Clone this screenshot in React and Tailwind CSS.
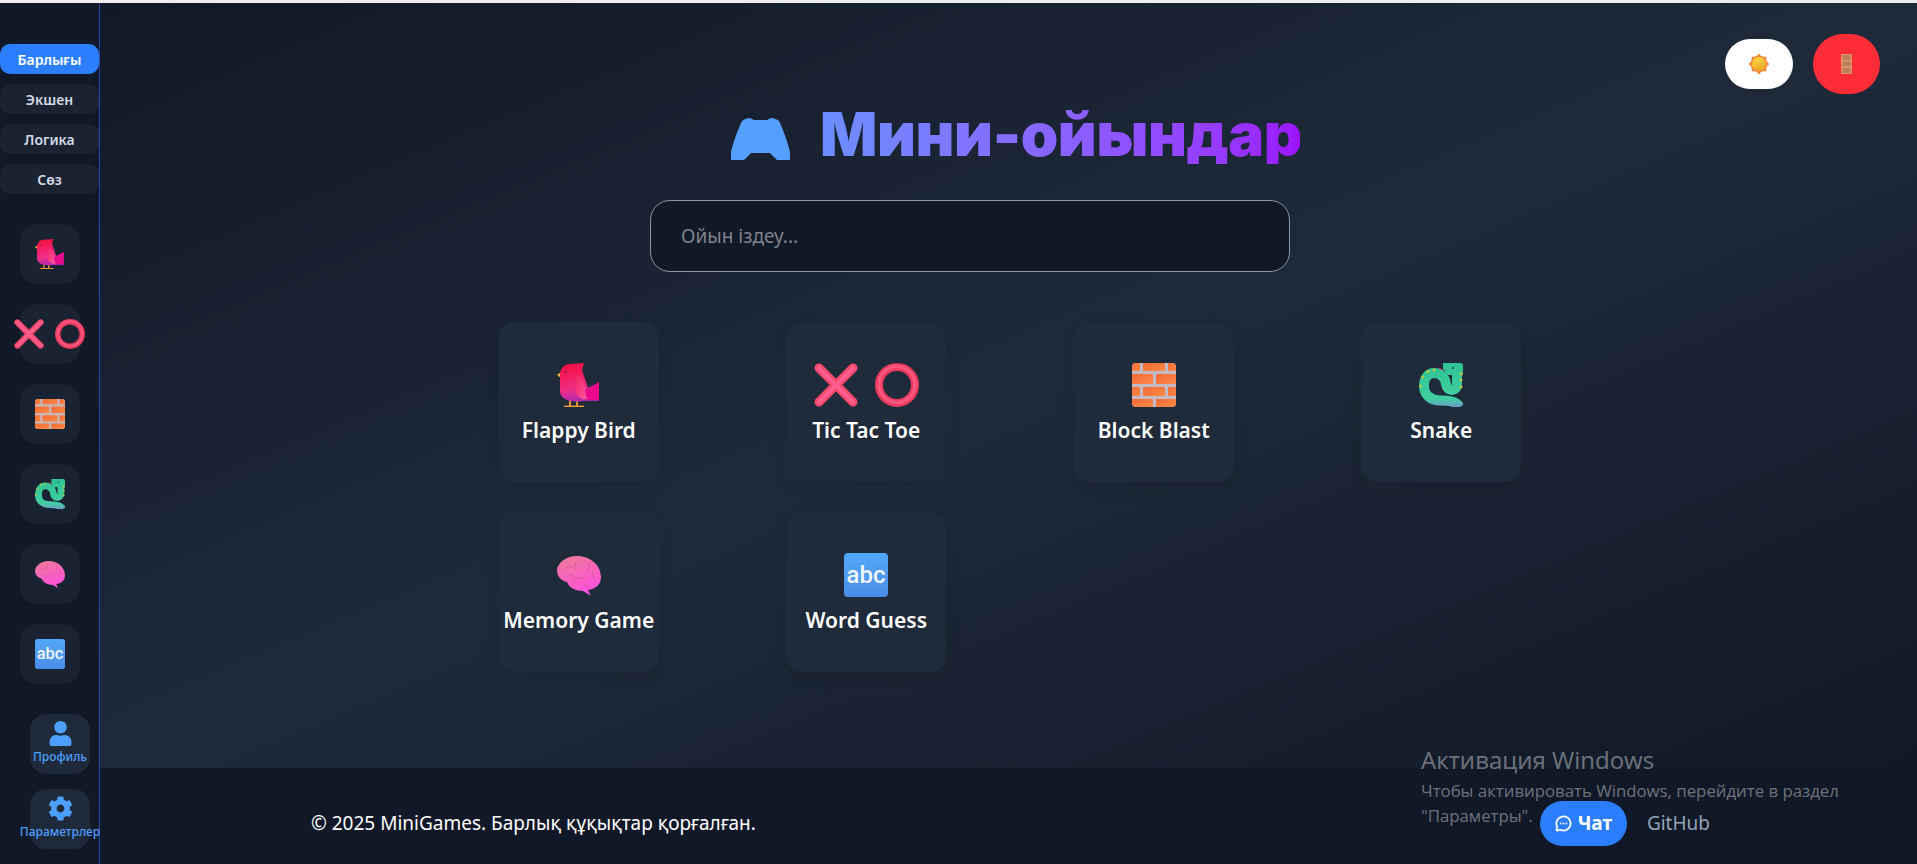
import { FaUser, FaCog } from "react-icons/fa";
import { MessageCircleMore } from "lucide-react";

const FONT = "font-['Noto_Sans','Open_Sans',sans-serif]";

function Bird({ size }) {
  return (
    <svg width={size} height={size} viewBox="0 0 44 44">
      <defs>
        <linearGradient id="birdBody" x1="0.3" y1="0" x2="0.5" y2="1">
          <stop offset="0" stopColor="#f5103f" />
          <stop offset="0.65" stopColor="#f02d86" />
          <stop offset="1" stopColor="#a92ab0" />
        </linearGradient>
        <linearGradient id="birdWing" x1="0" y1="0" x2="1" y2="1">
          <stop offset="0" stopColor="#f0225f" />
          <stop offset="1" stopColor="#ff5aa5" />
        </linearGradient>
      </defs>
      <path d="M13 36v7M20 36v7" stroke="#f0a030" strokeWidth="1.8" />
      <path d="M7 43.300h20" stroke="#f0a030" strokeWidth="1.400" />
      <path d="M0 12l4-3v6z" fill="#f4b93e" />
      <path d="M3 12C3 6 7 1 13 1l14-1-2 7 6 18 11-5v18H27c-3 .6-6 .6-9 .6C8 38 3 34 3 28z" fill="url(#birdBody)" />
      <path d="M18 12c4 0 7 3 9 10l4 14c-5 1-10-1-12-6z" fill="url(#birdWing)" />
      <path d="M42 19v18H30l-2-10z" fill="#ea0b8c" />
      <circle cx="9" cy="9" r="0.800" fill="#5c1030" />
    </svg>
  );
}

function Cross({ size }) {
  return (
    <svg width={size} height={size} viewBox="0 0 44 44">
      <path d="M5 5l34 34M39 5L5 39" stroke="#f8496f" strokeWidth="9" strokeLinecap="round" />
      <path d="M5 5l34 34M39 5L5 39" stroke="#ff5f8e" strokeWidth="4" strokeLinecap="round" />
    </svg>
  );
}

function Ring({ size }) {
  return (
    <svg width={size} height={size} viewBox="0 0 44 44">
      <circle cx="22" cy="22" r="18" fill="none" stroke="#ee3a5c" strokeWidth="8" />
      <circle cx="22" cy="21.500" r="18" fill="none" stroke="#f8557f" strokeWidth="3.500" />
    </svg>
  );
}

function Bricks({ size }) {
  const rows = [
    [[0, 8], [11, 22], [36, 8]],
    [[0, 21], [24, 20]],
    [[0, 8], [11, 22], [36, 8]],
    [[0, 21], [24, 20]],
  ];
  const ys = [0, 11, 24, 36];
  const hs = [8, 10, 9, 8];
  return (
    <svg width={size} height={size} viewBox="0 0 44 44">
      <defs>
        <clipPath id="brickClip"><rect width="44" height="44" rx="4" /></clipPath>
        <linearGradient id="brickFill" x1="0" y1="0" x2="1" y2="1">
          <stop offset="0" stopColor="#f56a35" />
          <stop offset="1" stopColor="#fb8a48" />
        </linearGradient>
      </defs>
      <g clipPath="url(#brickClip)">
        <rect width="44" height="44" fill="#c4bac4" />
        {rows.map((row, r) =>
          row.map(([x, w], i) => (
            <rect key={r + "-" + i} x={x} y={ys[r]} width={w} height={hs[r]} rx="1" fill="url(#brickFill)" />
          ))
        )}
      </g>
    </svg>
  );
}

function Snake({ size }) {
  return (
    <svg width={size} height={size} viewBox="0 0 44 44">
      <defs>
        <linearGradient id="snakeBody" gradientUnits="userSpaceOnUse" x1="0" y1="0" x2="0" y2="44">
          <stop offset="0" stopColor="#2fc295" />
          <stop offset="0.8" stopColor="#3fcf9f" />
          <stop offset="1" stopColor="#6a9fc8" />
        </linearGradient>
      </defs>
      <path d="M19 4l6 3-1 2-5 .5 2-2.500z" fill="#e6085f" />
      <path d="M38 5V21C38 29 28 29 27 21 26 14 22 10 15 10 8.500 10 5 16 5 23 5 32 12 37.500 21 37.500 30 37.500 37 38 41 44" fill="none" stroke="url(#snakeBody)" strokeWidth="10" />
      <path d="M24 0h17c2 0 3 1 3 3v9H29l-5-6z" fill="url(#snakeBody)" />
      <circle cx="34" cy="5" r="1" fill="#1d3b3a" />
      <g fill="#b9c93e">
        <circle cx="1.500" cy="23" r="1.500" /><circle cx="3.500" cy="14" r="1.500" /><circle cx="9" cy="8.500" r="1.500" /><circle cx="15" cy="7" r="1.500" />
        <circle cx="42" cy="11" r="1.500" /><circle cx="42" cy="17" r="1.500" /><circle cx="42" cy="24" r="1.500" />
      </g>
    </svg>
  );
}

function Brain({ size }) {
  return (
    <svg width={size} height={size} viewBox="0 0 44 44">
      <defs>
        <linearGradient id="brainBody" x1="0.2" y1="0" x2="0.6" y2="1">
          <stop offset="0" stopColor="#ee7a9a" />
          <stop offset="1" stopColor="#ff4fe0" />
        </linearGradient>
      </defs>
      <path d="M0 17C1 9 10 3 20 3 33 3 44 12 44 24 44 32 38 36 31 37L34 43 26 38C19 38 12 35 10 29 4 28 0 23 0 17z" fill="url(#brainBody)" />
      <path d="M7 17c4-5 9-4 12-1M16 27c4-3 11-3 14 0M32 9c1 5 0 8-4 11M37 18c-2 3-2 7 2 10M20 7c-2 2-2 4-1 7M12 21c2 2 4 3 6 2M26 30c1 2 3 3 6 3" fill="none" stroke="#d8568f" strokeWidth="0.800" />
    </svg>
  );
}

function Abc({ size }) {
  return (
    <svg width={size} height={size} viewBox="0 0 44 44">
      <defs>
        <linearGradient id="abcBox" x1="0" y1="0" x2="0" y2="1">
          <stop offset="0" stopColor="#52a8f8" />
          <stop offset="1" stopColor="#4a8de8" />
        </linearGradient>
      </defs>
      <rect width="44" height="44" rx="4" fill="url(#abcBox)" />
      <text x="22" y="30" textAnchor="middle" fontSize="24" fontWeight="500" fill="#f2f4ff" fontFamily="Roboto, sans-serif">abc</text>
    </svg>
  );
}

function Sun() {
  return (
    <svg width="20" height="20" viewBox="0 0 20 20">
      <defs>
        <linearGradient id="sunBody" x1="0.3" y1="0" x2="0.7" y2="1">
          <stop offset="0" stopColor="#fcd53f" />
          <stop offset="1" stopColor="#e8a426" />
        </linearGradient>
      </defs>
      <g fill="#f6853a">
        <circle cx="10" cy="10" r="8.500" />
        <circle cx="10" cy="1.500" r="1.500" /><circle cx="10" cy="18.500" r="1.500" /><circle cx="1.500" cy="10" r="1.500" /><circle cx="18.500" cy="10" r="1.500" />
        <circle cx="4" cy="4" r="1.500" /><circle cx="16" cy="4" r="1.500" /><circle cx="4" cy="16" r="1.500" /><circle cx="16" cy="16" r="1.500" />
      </g>
      <circle cx="10" cy="10" r="7" fill="url(#sunBody)" />
    </svg>
  );
}

function Door() {
  return (
    <svg width="11" height="20" viewBox="0 0 11 20">
      <rect width="11" height="20" fill="#e39460" />
      <rect x="1.500" y="1" width="8" height="5" fill="#b9805f" />
      <rect x="1.500" y="7.500" width="8" height="4.500" fill="#b9805f" />
      <rect x="1.500" y="14" width="8" height="5" fill="#b9805f" />
    </svg>
  );
}

function Xo({ size, gap }) {
  return (
    <div className="flex shrink-0" style={{ gap }}>
      <Cross size={size} />
      <Ring size={size} />
    </div>
  );
}

const GAMES = [
  { name: "Flappy Bird", icon: (s) => <Bird size={s} /> },
  { name: "Tic Tac Toe", icon: (s) => <Xo size={s} gap={s * 0.38} /> },
  { name: "Block Blast", icon: (s) => <Bricks size={s} /> },
  { name: "Snake", icon: (s) => <Snake size={s} /> },
  { name: "Memory Game", icon: (s) => <Brain size={s} /> },
  { name: "Word Guess", icon: (s) => <Abc size={s} /> },
];

const FILTERS = ["Барлығы", "Экшен", "Логика", "Сөз"];

export default function App() {
  return (
    <div className={`h-[864px] flex flex-col overflow-hidden bg-[#111827] ${FONT}`}>
      <div className="h-[3px] bg-[#eeeeee] shrink-0" />
      <div className="flex flex-1 min-h-0">

        {/* Sidebar */}
        <aside className="w-[100px] shrink-0 bg-[#111827] border-r border-[#2a46a6] pt-[41px]">
          <div className="flex flex-col gap-[10px]">
            {FILTERS.map((f, i) => (
              <button
                key={f}
                className={`h-[30px] rounded-[10px] text-[14px] font-semibold ${i === 0 ? "bg-[#2b7fff] text-white" : "bg-[#1a2332] text-[#d3dae5]"}`}
              >
                {f}
              </button>
            ))}
          </div>
          <div className="flex flex-col items-center gap-[20px] mt-[30px]">
            {GAMES.map((g) => (
              <div key={g.name} className="w-[60px] h-[60px] rounded-[16px] bg-[#1a2332] flex items-center justify-center">
                {g.icon(30)}
              </div>
            ))}
          </div>
          <div className="flex flex-col gap-[15px] mt-[30px] ml-[30px]">
            <div className="relative w-[60px] h-[60px] rounded-[16px] bg-[#1e2a3a] flex flex-col items-center pt-[7px] text-[#4d9fff]">
              <FaUser size={25} />
              <span className="text-[12px] leading-[14px] font-medium mt-[4px] whitespace-nowrap">Профиль</span>
            </div>
            <div className="relative w-[60px] h-[60px] rounded-[16px] bg-[#1e2a3a] flex flex-col items-center pt-[7px] text-[#4d9fff]">
              <FaCog size={25} />
              <span className="text-[12px] leading-[14px] font-medium mt-[4px] whitespace-nowrap">Параметрлер</span>
            </div>
          </div>
        </aside>

        <div className="flex-1 min-w-0 flex flex-col relative">

          {/* Main */}
          <main className="flex-1 min-h-0 bg-linear-to-br from-[#111827] via-[#1e2a3a] to-[#111827]">
            <div className="flex justify-end items-center gap-[20px] pr-[37px] pt-[31px] h-[60px] box-content">
              <button className="w-[68px] h-[50px] rounded-full bg-white flex items-center justify-center"><Sun /></button>
              <button className="w-[67px] h-[60px] rounded-full bg-[#ff2d37] flex items-center justify-center"><Door /></button>
            </div>

            <div className="flex items-end h-[60px] mt-[6px] ml-[631px]">
              <svg width="59" height="42" viewBox="0 0 59 42" className="shrink-0">
                <path d="M11 3c2-2 6-3 8-3l4 2h13l4-2c2 0 6 1 8 3 4 8 9 22 11 31v8H46l-7-7H20l-7 7H0v-8C2 25 7 11 11 3z" fill="#559fff" />
              </svg>
              <h1 className="ml-[30px] mb-[-4px] w-[480px] text-[60px] leading-[60px] font-black font-['Inter',sans-serif] tracking-[-0.4px] whitespace-nowrap bg-linear-to-r from-[#6a8eff] to-[#9b12ff] bg-clip-text text-transparent">
                Мини-ойындар
              </h1>
            </div>

            <div className="ml-[550px] mt-[40px] w-[640px] h-[72px] rounded-[20px] border border-[#8d95a3] bg-[#111827] flex items-center px-[30px]">
              <input
                placeholder="Ойын іздеу..."
                className="w-full bg-transparent outline-none text-[19px] text-white placeholder:text-[#7f838b]"
              />
            </div>

            <div className="ml-[335px] mt-[50px] w-[1150px] grid grid-cols-4 gap-y-[30px] justify-items-center">
              {GAMES.map((g) => (
                <div
                  key={g.name}
                  className="w-[160px] h-[160px] rounded-[16px] bg-[#1f2a3a] shadow-[0_6px_18px_rgba(0,0,0,0.06)] flex flex-col items-center pt-[41px]"
                >
                  {g.icon(44)}
                  <span className="mt-[8px] text-[21px] leading-[30px] font-semibold text-white whitespace-nowrap">{g.name}</span>
                </div>
              ))}
            </div>
          </main>

          {/* Footer */}
          <footer className="h-[96px] shrink-0 bg-[#111827] flex items-center pl-[211px] pt-[14px]">
            <span className="text-[19px] text-white">© 2025 MiniGames. Барлық құқықтар қорғалған.</span>
            <button className="ml-auto h-[45px] w-[87px] rounded-full bg-[#2b7fff] text-white font-bold text-[19px] flex items-center justify-center gap-[6px]">
              <MessageCircleMore size={17} strokeWidth={2.5} />
              Чат
            </button>
            <span className="ml-[20px] mr-[207px] text-[19px] text-[#94a3b8]">GitHub</span>
          </footer>

          {/* Windows watermark */}
          <div className="absolute left-[1321px] top-[741px] text-white/40 pointer-events-none font-['Open_Sans',sans-serif]">
            <p className="text-[24px] leading-[32px]">Активация Windows</p>
            <p className="text-[16.800px] leading-[25px] w-[450px] mt-[2px]">Чтобы активировать Windows, перейдите в раздел "Параметры".</p>
          </div>
        </div>
      </div>
    </div>
  );
}
